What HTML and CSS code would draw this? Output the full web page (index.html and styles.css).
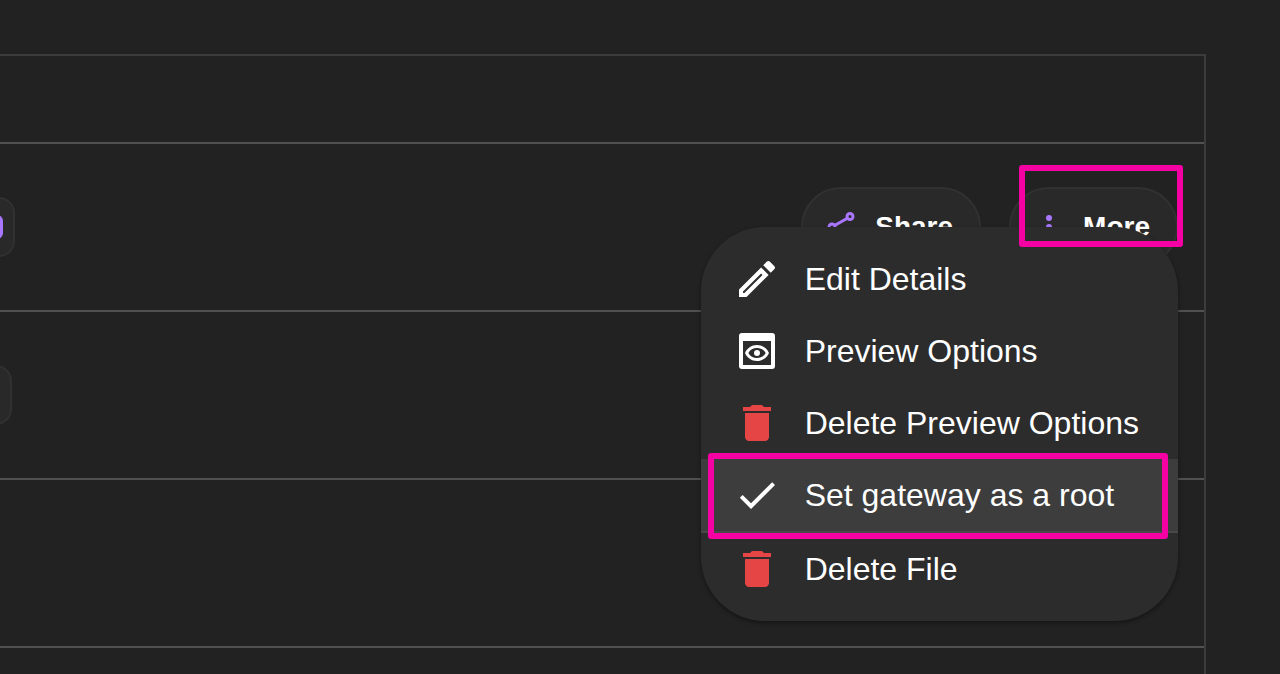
FILE: index.html
```
<!DOCTYPE html>
<html lang="en">
  <head>
    <meta charset="UTF-8" />
    <meta name="viewport" content="width=device-width, initial-scale=1" />
    <title>Files</title>
    <link rel="stylesheet" href="styles.css">
  </head>
  <body>
    <main class="file-list">
      <div class="file-head"></div>

      <div class="file-row">
        <span class="chip chip-wide"><span class="chip-mark"></span></span>
        <div class="file-actions">
          <button type="button" class="pill-btn">
            <svg class="pill-icon" viewBox="0 0 32 32" fill="none" stroke="currentColor" stroke-width="3">
              <path d="M9.500 14.500 22 7.500M9.500 17.500 22 24.500" />
              <circle cx="7" cy="16" r="3" />
              <circle cx="25" cy="5.500" r="3" />
              <circle cx="25" cy="26.500" r="3" />
            </svg>
            Share
          </button>

          <div class="more">
            <button type="button" class="pill-btn" aria-haspopup="menu" aria-expanded="true">
              <svg class="pill-icon" viewBox="0 0 32 32" fill="currentColor">
                <circle cx="16" cy="7" r="3" />
                <circle cx="16" cy="16" r="3" />
                <circle cx="16" cy="25" r="3" />
              </svg>
              More
            </button>

            <!-- More menu -->
            <div class="menu" role="menu">
              <button type="button" class="menu-item" role="menuitem">
                <svg class="menu-icon" viewBox="0 0 24 24">
                  <path fill-rule="evenodd" d="M3 17.250V21h3.750L17.810 9.940l-3.750-3.750zM5 18.300l9.060-9.060.7.7L5.700 19H5z" />
                  <path d="M17.660 3c-.25 0-.51.1-.7.290l-1.830 1.830 3.750 3.750 1.830-1.830c.39-.39.39-1.020 0-1.410l-2.340-2.340c-.2-.2-.45-.29-.71-.29z" />
                </svg>
                Edit Details
              </button>
              <button type="button" class="menu-item" role="menuitem">
                <svg class="menu-icon" viewBox="0 0 24 24">
                  <path fill-rule="evenodd" d="M4.500 3h15A1.500 1.500 0 0 1 21 4.500v15a1.500 1.500 0 0 1-1.500 1.500h-15A1.500 1.500 0 0 1 3 19.500v-15A1.500 1.500 0 0 1 4.500 3zM5 7v12h14V7z" />
                  <path fill-rule="evenodd" d="M12 9c-2.730 0-5.060 1.660-6 4 .94 2.340 3.270 4 6 4s5.060-1.660 6-4c-.94-2.340-3.270-4-6-4zm0 1.500c1.900 0 3.500.9 4.300 2.500-.8 1.600-2.400 2.500-4.300 2.500s-3.500-.9-4.300-2.500c.8-1.600 2.400-2.500 4.300-2.500z" />
                  <circle cx="12" cy="13" r="1.500" />
                </svg>
                Preview Options
              </button>
              <button type="button" class="menu-item" role="menuitem">
                <svg class="menu-icon danger" viewBox="0 0 24 24">
                  <path d="M6 19c0 1.100.9 2 2 2h8c1.100 0 2-.9 2-2V7H6v12zM19 4h-3.500l-1-1h-5l-1 1H5v2h14V4z" />
                </svg>
                Delete Preview Options
              </button>
              <button type="button" class="menu-item active" role="menuitem">
                <svg class="menu-icon" viewBox="0 0 24 24">
                  <path d="M9 16.170 4.830 12l-1.420 1.410L9 19 21 7l-1.410-1.410z" />
                </svg>
                Set gateway as a root
                <span class="marker marker-item"></span>
              </button>
              <button type="button" class="menu-item" role="menuitem">
                <svg class="menu-icon danger" viewBox="0 0 24 24">
                  <path d="M6 19c0 1.100.9 2 2 2h8c1.100 0 2-.9 2-2V7H6v12zM19 4h-3.500l-1-1h-5l-1 1H5v2h14V4z" />
                </svg>
                Delete File
              </button>
            </div>

            <span class="marker marker-more"></span>
          </div>
        </div>
      </div>

      <div class="file-row">
        <span class="chip"></span>
      </div>
      <div class="file-row"></div>
    </main>
  </body>
</html>
```
FILE: styles.css
```
* {
  box-sizing: border-box;
}

body {
  display: flex;
  flex-direction: column;
  margin: 0;
  min-height: 100vh;
  overflow-x: hidden;
  background: #222222;
  color: #ffffff;
  font-family: "Liberation Sans", Arial, sans-serif;
}

/* File list, runs off the left side of the window */
.file-list {
  flex: 1;
  margin: 54px 74px 0 -48px;
  border: 2px solid #3c3c3c;
  border-bottom: none;
}

.file-head {
  height: 88px;
  border-bottom: 2px solid #505050;
}

.file-row {
  display: flex;
  align-items: center;
  height: 168px;
  padding-right: 26px;
  border-bottom: 2px solid #505050;
}

.chip {
  display: flex;
  align-items: center;
  justify-content: flex-end;
  width: 58px;
  height: 60px;
  padding-right: 10px;
  background: #292929;
  border: 2px solid #313131;
  border-radius: 16px;
}

.chip-wide {
  width: 61px;
}

.chip-mark {
  width: 24px;
  height: 24px;
  border-radius: 6px;
  background: #a977ff;
}

.file-actions {
  display: flex;
  gap: 28px;
  margin-left: auto;
}

.pill-btn {
  display: flex;
  align-items: center;
  gap: 18px;
  height: 80px;
  padding: 0 26px 0 22px;
  background: #292929;
  border: 2px solid #313131;
  border-radius: 40px;
  color: #ffffff;
  font-family: inherit;
  font-size: 28px;
  font-weight: bold;
  cursor: pointer;
}

.pill-icon {
  width: 32px;
  height: 32px;
  color: #a977ff;
}

/* More menu */
.more {
  position: relative;
}

.menu {
  position: absolute;
  top: 50%;
  right: 0;
  z-index: 10;
  padding: 16px 0;
  background: #2c2c2c;
  border-radius: 64px;
  box-shadow: 0 2px 4px rgba(0, 0, 0, 0.4);
}

.menu-item {
  position: relative;
  display: flex;
  align-items: center;
  gap: 24px;
  width: 100%;
  height: 72px;
  padding: 0 39px 0 32px;
  background: none;
  border: none;
  color: #ffffff;
  font-family: inherit;
  font-size: 32px;
  white-space: nowrap;
  cursor: pointer;
}

.menu-item:hover,
.menu-item.active {
  background: #3d3d3d;
}

.menu-item.active {
  height: 74px;
  border-bottom: 2px solid #484848;
}

.menu-icon {
  flex: none;
  width: 48px;
  height: 48px;
  fill: #ffffff;
}

.menu-icon.danger {
  fill: #e54545;
}

/* Pink callout frames */
.marker {
  position: absolute;
  border: 6px solid #f500a3;
  border-radius: 3px;
  pointer-events: none;
}

.marker-more {
  top: -22px;
  left: 10px;
  right: -5px;
  height: 82px;
  z-index: 11;
}

.marker-item {
  top: -6px;
  left: 7px;
  right: 10px;
  height: 86px;
}
```
